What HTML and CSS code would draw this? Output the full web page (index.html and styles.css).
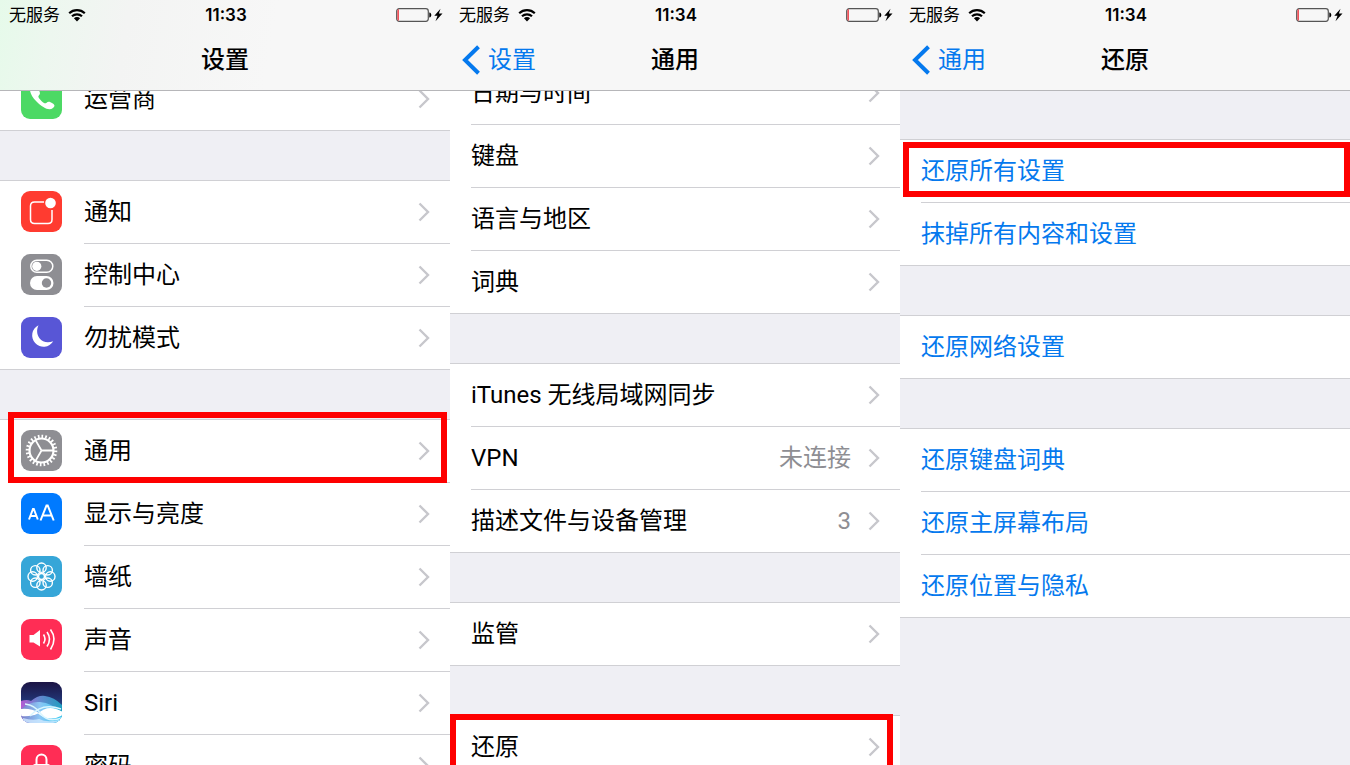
FILE: index.html
```html
<!DOCTYPE html>
<html lang="zh-CN">
<head>
  <meta charset="utf-8">
  <title>还原所有设置</title>
  <link rel="stylesheet" href="styles.css">
</head>
<body>

<svg class="defs" aria-hidden="true">
  <symbol id="chevron" viewBox="0 0 12 20"><path d="M1.5 1.5 10 10l-8.500 8.500" fill="none" stroke="#c7c7cc" stroke-width="2.400"/></symbol>
  <symbol id="back" viewBox="0 0 20 30"><path d="M17.500 1.800 4 15l13.500 13.200" fill="none" stroke="#0579ee" stroke-width="4"/></symbol>
  <symbol id="wifi" viewBox="0 0 18 14">
    <path d="M1.200 5.200a11.200 11.200 0 0 1 15.600 0M4 8.300a7.200 7.200 0 0 1 10 0" fill="none" stroke="#000" stroke-width="2.200"/>
    <path d="M9 13.500 5.900 10.300a4.400 4.400 0 0 1 6.200 0z"/>
  </symbol>
  <symbol id="battery" viewBox="0 0 47 14">
    <rect x=".7" y=".7" width="31.600" height="12.600" rx="2.500" fill="none" stroke="#555" stroke-width="1.200"/>
    <path d="M3 1.300h-.5Q1.300 1.500 1.300 3v8q0 1.500 1.700 1.700z" fill="#f0525a"/>
    <path d="M33.300 4.500c1.500.3 2 1.300 2 2.500s-.5 2.200-2 2.500z"/>
    <path d="M44.500.8 38.300 7.700h3.200L39.500 13.200l7-7.700h-3.600z"/>
  </symbol>
</svg>

<div class="screens">

  <section class="screen">
    <header class="bar tinted">
      <div class="status">
        <span class="carrier">无服务 <svg class="wifi"><use href="#wifi"/></svg></span>
        <b>11:33</b>
        <svg class="battery"><use href="#battery"/></svg>
      </div>
      <div class="nav"><h1>设置</h1></div>
    </header>
    <div class="scroll cut-icons">
      <ul class="group">
        <li><a href="#">
          <svg class="icon" viewBox="0 0 41 41"><rect width="41" height="41" rx="9" fill="#4cd964"/><path d="M10.500 8c-3 3-1.500 9 5 15.500s12.500 9.500 16.500 6.500c2-1.600 2-3-.2-4.500-3.200-2.200-4.600-2.400-6.200-.8-1.300 1.200-2.500.7-5.400-2s-3.500-4.200-2.200-5.500c1.500-1.600 1.300-3-.9-6-2.400-3.400-4-5.200-6.600-3.200z" fill="#fff"/></svg>
          <span class="label">运营商 <svg class="chevron"><use href="#chevron"/></svg></span></a></li>
      </ul>
      <ul class="group">
        <li><a href="#">
          <svg class="icon" viewBox="0 0 41 41"><rect width="41" height="41" rx="9" fill="#ff3b30"/><path d="M23 11H13.500Q9.500 11 9.500 15v13.500q0 4 4 4H27q4 0 4-4V19" fill="none" stroke="#fff" stroke-width="1.500"/><circle cx="29.500" cy="12" r="5.300" fill="#fff"/></svg>
          <span class="label">通知 <svg class="chevron"><use href="#chevron"/></svg></span></a></li>
        <li><a href="#">
          <svg class="icon" viewBox="0 0 41 41"><rect width="41" height="41" rx="9" fill="#8e8e93"/><rect x="9.800" y="6.300" width="22" height="12" rx="6" fill="none" stroke="#fff" stroke-width="1.500"/><circle cx="15.800" cy="12.300" r="4.600" fill="#fff"/><rect x="9" y="22" width="23.500" height="14" rx="7" fill="#fff"/><circle cx="25.500" cy="29" r="4.700" fill="#8e8e93"/></svg>
          <span class="label">控制中心 <svg class="chevron"><use href="#chevron"/></svg></span></a></li>
        <li><a href="#">
          <svg class="icon" viewBox="0 0 41 41"><rect width="41" height="41" rx="9" fill="#5856d6"/><path d="M17.500 8.300a11.300 11.300 0 1 0 14.700 15.900c-5.500 2-10.800.9-13.700-3-2.700-3.700-3.200-8.400-1-12.900z" fill="#fff"/></svg>
          <span class="label">勿扰模式 <svg class="chevron"><use href="#chevron"/></svg></span></a></li>
      </ul>
      <ul class="group">
        <li class="marked mark-general"><a href="#">
          <svg class="icon" viewBox="0 0 41 41"><rect width="41" height="41" rx="9" fill="#8e8e93"/><g fill="none" stroke="#fff"><circle cx="20.500" cy="20.500" r="14.200" stroke-width="3.200" pathLength="240" stroke-dasharray="4.500 5.500"/><circle cx="20.500" cy="20.500" r="12" stroke-width="2.200"/><path d="M20.500 20.500h12M20.500 20.500l-6 10.400M20.500 20.500l-6-10.400" stroke-width="1.800"/></g></svg>
          <span class="label">通用 <svg class="chevron"><use href="#chevron"/></svg></span></a></li>
        <li><a href="#">
          <svg class="icon" viewBox="0 0 41 41"><rect width="41" height="41" rx="9" fill="#007aff"/><path d="M8 26.500l4-10.500h.8l4 10.500M9.500 23h5.800M19.500 27.500l6-15h1.200l6 15M21.500 22.500h9" fill="none" stroke="#fff" stroke-width="2"/></svg>
          <span class="label">显示与亮度 <svg class="chevron"><use href="#chevron"/></svg></span></a></li>
        <li><a href="#">
          <svg class="icon" viewBox="0 0 41 41"><rect width="41" height="41" rx="9" fill="#36a6d8"/><g fill="none" stroke="#fff" stroke-width="1.400"><circle cx="20.500" cy="11.700" r="4.700"/><circle cx="26.700" cy="14.300" r="4.700"/><circle cx="29.300" cy="20.500" r="4.700"/><circle cx="26.700" cy="26.700" r="4.700"/><circle cx="20.500" cy="29.300" r="4.700"/><circle cx="14.300" cy="26.700" r="4.700"/><circle cx="11.700" cy="20.500" r="4.700"/><circle cx="14.300" cy="14.300" r="4.700"/><circle cx="20.500" cy="20.500" r="3"/></g></svg>
          <span class="label">墙纸 <svg class="chevron"><use href="#chevron"/></svg></span></a></li>
        <li><a href="#">
          <svg class="icon" viewBox="0 0 41 41"><rect width="41" height="41" rx="9" fill="#ff2d55"/><path d="M8.500 16h4l6.500-5v16.500l-6.500-4h-4z" fill="#fff"/><path d="M22.500 15.500q3 4.500 0 9M26 13q5 7 0 14.500M29.500 10.500q7 9.500 0 20" fill="none" stroke="#fff" stroke-width="1.600"/></svg>
          <span class="label">声音 <svg class="chevron"><use href="#chevron"/></svg></span></a></li>
        <li><a href="#">
          <svg class="icon" viewBox="0 0 41 41">
            <defs>
              <linearGradient id="night" x1="0" y1="0" x2="0" y2="1"><stop offset="0" stop-color="#1c1444"/><stop offset=".4" stop-color="#20306e"/><stop offset="1" stop-color="#3f86c8"/></linearGradient>
              <linearGradient id="wave"><stop offset="0" stop-color="#d65fe6"/><stop offset=".4" stop-color="#7d9ae8"/><stop offset="1" stop-color="#1cb4cf"/></linearGradient>
              <linearGradient id="foam"><stop offset="0" stop-color="#7a7cc8"/><stop offset=".45" stop-color="#8cc6f4"/><stop offset="1" stop-color="#35c9f2"/></linearGradient>
              <clipPath id="tile"><rect width="41" height="41" rx="9"/></clipPath>
            </defs>
            <g clip-path="url(#tile)">
              <rect width="41" height="41" fill="url(#night)"/>
              <path d="M0 19q6-2 10 0 7-6 14-5 9 1 17 9v18H0z" fill="url(#wave)" opacity=".8"/>
              <path d="M0 27q9-8 19-7 12 1 22 11v10H0z" fill="url(#foam)"/>
              <path d="M0 27q10-1 18 4-8 4-18 3z" fill="#fff"/>
              <path d="M17 31.500q10-10 24-2v4q-13 7-24-2z" fill="#fff"/>
              <path d="M9 34q12-14 31-7M4 22q10 1 16 10 7 9 21 4" fill="none" stroke="#d8f6ff" stroke-width="1.500"/>
              <path d="M2 36q9 3 16 1 8 4 20 1v3H2z" fill="#cfe8ff" opacity=".8"/>
            </g>
          </svg>
          <span class="label">Siri <svg class="chevron"><use href="#chevron"/></svg></span></a></li>
        <li><a href="#">
          <svg class="icon" viewBox="0 0 41 41"><rect width="41" height="41" rx="9" fill="#ff2d55"/><path d="M15.500 20v-5.500a5 5 0 0 1 10 0V20" fill="none" stroke="#fff" stroke-width="2"/><rect x="12" y="19" width="17" height="13" rx="2" fill="#fff"/></svg>
          <span class="label">密码 <svg class="chevron"><use href="#chevron"/></svg></span></a></li>
      </ul>
    </div>
  </section>

  <section class="screen">
    <header class="bar">
      <div class="status">
        <span class="carrier">无服务 <svg class="wifi"><use href="#wifi"/></svg></span>
        <b>11:34</b>
        <svg class="battery"><use href="#battery"/></svg>
      </div>
      <div class="nav"><a class="back" href="#"><svg><use href="#back"/></svg>设置</a><h1>通用</h1></div>
    </header>
    <div class="scroll cut-text">
      <ul class="group">
        <li><a href="#"><span class="label">日期与时间 <svg class="chevron"><use href="#chevron"/></svg></span></a></li>
        <li><a href="#"><span class="label">键盘 <svg class="chevron"><use href="#chevron"/></svg></span></a></li>
        <li><a href="#"><span class="label">语言与地区 <svg class="chevron"><use href="#chevron"/></svg></span></a></li>
        <li><a href="#"><span class="label">词典 <svg class="chevron"><use href="#chevron"/></svg></span></a></li>
      </ul>
      <ul class="group">
        <li><a href="#"><span class="label">iTunes 无线局域网同步 <svg class="chevron"><use href="#chevron"/></svg></span></a></li>
        <li><a href="#"><span class="label">VPN <span class="value">未连接</span><svg class="chevron"><use href="#chevron"/></svg></span></a></li>
        <li><a href="#"><span class="label">描述文件与设备管理 <span class="value">3</span><svg class="chevron"><use href="#chevron"/></svg></span></a></li>
      </ul>
      <ul class="group">
        <li><a href="#"><span class="label">监管 <svg class="chevron"><use href="#chevron"/></svg></span></a></li>
      </ul>
      <ul class="group">
        <li class="marked mark-reset"><a href="#"><span class="label">还原 <svg class="chevron"><use href="#chevron"/></svg></span></a></li>
      </ul>
    </div>
  </section>

  <section class="screen">
    <header class="bar">
      <div class="status">
        <span class="carrier">无服务 <svg class="wifi"><use href="#wifi"/></svg></span>
        <b>11:34</b>
        <svg class="battery"><use href="#battery"/></svg>
      </div>
      <div class="nav"><a class="back" href="#"><svg><use href="#back"/></svg>通用</a><h1>还原</h1></div>
    </header>
    <div class="scroll actions">
      <ul class="group">
        <li class="marked mark-all"><a href="#"><span class="label">还原所有设置</span></a></li>
        <li><a href="#"><span class="label">抹掉所有内容和设置</span></a></li>
      </ul>
      <ul class="group">
        <li><a href="#"><span class="label">还原网络设置</span></a></li>
      </ul>
      <ul class="group">
        <li><a href="#"><span class="label">还原键盘词典</span></a></li>
        <li><a href="#"><span class="label">还原主屏幕布局</span></a></li>
        <li><a href="#"><span class="label">还原位置与隐私</span></a></li>
      </ul>
    </div>
  </section>

</div>

</body>
</html>
```
FILE: styles.css
```css
* {box-sizing:border-box;}
body {margin:0; background:#efeff4; color:#000; font:24px/30px Roboto, "Noto Sans CJK SC", sans-serif;}
h1, ul {margin:0; padding:0;}
ul {list-style:none;}
a {color:inherit; text-decoration:none;}
svg {display:block; flex:none;}
.defs {position:absolute; width:0; height:0;}

.screens {display:grid; grid-template-columns:repeat(3, 1fr); height:100vh; overflow:hidden;}
.screen {display:flex; flex-direction:column; min-width:0; min-height:0;}

/* status + navigation bar */
.bar {flex:none; background:#f7f7f7; border-bottom:1px solid #b6b6b9;}
.tinted {background:linear-gradient(100deg, #e6faea 0, #edf7ef 12%, #f3f4f3 28%, #f7f7f7 60%);}
.status {display:grid; grid-template-columns:1fr auto 1fr; align-items:center; height:30px; padding:0 7px 0 9px; font-size:17px; line-height:24px;}
.status b {font-family:Inter, sans-serif; font-weight:600;}
.carrier {display:flex; align-items:center; gap:8px;}
.wifi {width:18px; height:14px;}
.battery {width:47px; height:14px; justify-self:end;}
.nav {display:grid; grid-template-columns:1fr auto 1fr; align-items:center; height:60px; padding:0 11px;}
.nav h1 {grid-column:2; font-size:24px; font-weight:500;}
.back {display:flex; align-items:center; gap:7px; color:#0579ee;}
.back svg {width:20px; height:30px;}

/* lists */
.scroll {flex:1; min-height:0; overflow:hidden;}
.group {margin-bottom:49px; background:#fff; border-top:1px solid #d0d0d4;}
.group li {position:relative; height:63px;}
.group a {display:flex; align-items:center; gap:22px; height:100%; padding-left:21px;}
.icon {width:41px; height:41px; margin-bottom:2px;}
.label {flex:1; display:flex; align-items:center; height:100%; padding-right:20px; border-bottom:1px solid #d0d0d4;}
.group li:last-child a {border-bottom:1px solid #d0d0d4;}
.group li:last-child .label {border-bottom:0;}
.chevron {width:12px; height:20px; margin-left:auto;}
.value {margin-left:auto; color:#8e8e93;}
.value + .chevron {margin-left:17px;}

/* lists scrolled part way under the bar */
.cut-icons .group:first-child {margin-top:-24px;}
.cut-text .group:first-child {margin-top:-30px;}
.actions {padding-top:48px; color:#0579ee;}

/* red frames over the rows to tap */
.marked:after {content:""; position:absolute; z-index:1; border:6px solid #fe0000; pointer-events:none;}
.mark-general:after {top:-8px; right:3px; bottom:0; left:8px;}
.mark-reset:after {top:-2px; right:7px; bottom:-7px; left:0;}
.mark-all:after {top:2px; right:0; bottom:6px; left:3px;}
```
